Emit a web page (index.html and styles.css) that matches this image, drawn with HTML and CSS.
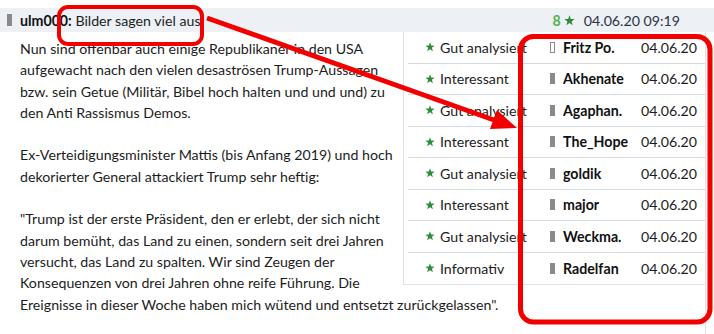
FILE: index.html
```html
<!DOCTYPE html>
<html lang="de">
<head>
    <meta charset="UTF-8">
    <title>Bilder sagen viel aus</title>
    <link rel="stylesheet" href="styles.css">
</head>
<body>
    <!-- Post header -->
    <div class="post-head">
        <div class="post-title">
            <span class="marker"></span>
            <b>ulm000:</b>&nbsp;Bilder sagen viel aus
        </div>
        <div class="post-meta">
            <span class="votes">8</span>
            <svg class="star" width="11" height="11" viewBox="0 0 10 10"><polygon points="5,0.3 6.2,3.6 9.7,3.7 6.9,5.8 7.9,9.3 5,7.2 2.1,9.3 3.1,5.8 0.3,3.7 3.8,3.6" fill="#2e8d3a"/></svg>
            <span class="stamp">04.06.20 09:19</span>
        </div>
    </div>

    <!-- Post body -->
    <div class="post-body">
        <div class="ratings">
            <div class="rating"><svg class="star" width="10" height="10" viewBox="0 0 10 10"><polygon points="5,0.3 6.2,3.6 9.7,3.7 6.9,5.8 7.9,9.3 5,7.2 2.1,9.3 3.1,5.8 0.3,3.7 3.8,3.6" fill="#2e8d3a"/></svg><span class="label">Gut analysiert</span><span class="bar hollow"></span><span class="user">Fritz Po.</span><span class="date">04.06.20</span></div>
            <div class="rating"><svg class="star" width="10" height="10" viewBox="0 0 10 10"><polygon points="5,0.3 6.2,3.6 9.7,3.7 6.9,5.8 7.9,9.3 5,7.2 2.1,9.3 3.1,5.8 0.3,3.7 3.8,3.6" fill="#2e8d3a"/></svg><span class="label">Interessant</span><span class="bar"></span><span class="user">Akhenate</span><span class="date">04.06.20</span></div>
            <div class="rating"><svg class="star" width="10" height="10" viewBox="0 0 10 10"><polygon points="5,0.3 6.2,3.6 9.7,3.7 6.9,5.8 7.9,9.3 5,7.2 2.1,9.3 3.1,5.8 0.3,3.7 3.8,3.6" fill="#2e8d3a"/></svg><span class="label">Gut analysiert</span><span class="bar"></span><span class="user">Agaphan.</span><span class="date">04.06.20</span></div>
            <div class="rating"><svg class="star" width="10" height="10" viewBox="0 0 10 10"><polygon points="5,0.3 6.2,3.6 9.7,3.7 6.9,5.8 7.9,9.3 5,7.2 2.1,9.3 3.1,5.8 0.3,3.7 3.8,3.6" fill="#2e8d3a"/></svg><span class="label">Interessant</span><span class="bar"></span><span class="user">The_Hope</span><span class="date">04.06.20</span></div>
            <div class="rating"><svg class="star" width="10" height="10" viewBox="0 0 10 10"><polygon points="5,0.3 6.2,3.6 9.7,3.7 6.9,5.8 7.9,9.3 5,7.2 2.1,9.3 3.1,5.8 0.3,3.7 3.8,3.6" fill="#2e8d3a"/></svg><span class="label">Gut analysiert</span><span class="bar"></span><span class="user">goldik</span><span class="date">04.06.20</span></div>
            <div class="rating"><svg class="star" width="10" height="10" viewBox="0 0 10 10"><polygon points="5,0.3 6.2,3.6 9.7,3.7 6.9,5.8 7.9,9.3 5,7.2 2.1,9.3 3.1,5.8 0.3,3.7 3.8,3.6" fill="#2e8d3a"/></svg><span class="label">Interessant</span><span class="bar"></span><span class="user">major</span><span class="date">04.06.20</span></div>
            <div class="rating"><svg class="star" width="10" height="10" viewBox="0 0 10 10"><polygon points="5,0.3 6.2,3.6 9.7,3.7 6.9,5.8 7.9,9.3 5,7.2 2.1,9.3 3.1,5.8 0.3,3.7 3.8,3.6" fill="#2e8d3a"/></svg><span class="label">Gut analysiert</span><span class="bar"></span><span class="user">Weckma.</span><span class="date">04.06.20</span></div>
            <div class="rating"><svg class="star" width="10" height="10" viewBox="0 0 10 10"><polygon points="5,0.3 6.2,3.6 9.7,3.7 6.9,5.8 7.9,9.3 5,7.2 2.1,9.3 3.1,5.8 0.3,3.7 3.8,3.6" fill="#2e8d3a"/></svg><span class="label">Informativ</span><span class="bar"></span><span class="user">Radelfan</span><span class="date">04.06.20</span></div>
        </div>
        <div class="post-text">
            Nun sind offenbar auch einige Republikaner in den USA aufgewacht nach den vielen desaströsen Trump-Aussagen bzw. sein Getue (Militär, Bibel hoch halten und und und) zu den Anti Rassismus Demos.<br><br>
            Ex-Verteidigungsminister Mattis (bis Anfang 2019) und hoch dekorierter General attackiert Trump sehr heftig:<br><br>
            "Trump ist der erste Präsident, den er erlebt, der sich nicht darum bemüht, das Land zu einen, sondern seit drei Jahren versucht, das Land zu spalten. Wir sind Zeugen der Konsequenzen von drei Jahren ohne reife Führung. Die Ereignisse in dieser Woche haben mich wütend und entsetzt zurückgelassen".
        </div>
    </div>

    <!-- Red annotation marks drawn over the screenshot -->
    <svg class="annotations" width="714" height="334" viewBox="0 0 714 334">
        <rect x="59" y="7" width="143" height="37" rx="9" fill="none" stroke="#f20000" stroke-width="4"/>
        <line x1="207" y1="18" x2="494" y2="120" stroke="#f20000" stroke-width="5"/>
        <polygon points="517,128 497,110 490,129" fill="#f20000"/>
        <rect x="520.5" y="36.5" width="189.5" height="285.5" rx="13" fill="none" stroke="#f20000" stroke-width="5"/>
    </svg>
</body>
</html>
```

FILE: styles.css
```css
/* Page basics */
body {
    margin: 0;
    padding-top: 8px;
    font-family: Lato, "Noto Sans", sans-serif;
    font-size: 14.2px;
    color: #1c1c1c;
    background-color: white;
    position: relative;
}

/* Header bar of the post */
.post-head {
    height: 24px;
    background-color: #edf0f4;
    display: flex;
    align-items: center;
    justify-content: space-between;
    padding: 0 34px 0 7px;
}

.post-title {
    display: flex;
    align-items: center;
}

.post-title b {
    color: #111;
}

.marker {
    width: 5px;
    height: 12px;
    background-color: #8a8a8a;
    margin-right: 8px;
}

.post-meta {
    display: flex;
    align-items: center;
}

.votes {
    color: #55b04f;
    font-weight: bold;
    margin-right: 3px;
}

.post-meta .star {
    margin-right: 9px;
}

.stamp {
    color: #2b3447;
}

/* Body of the post, ratings float on the right */
.post-body {
    margin-right: 8px;
    padding-left: 20px;
    border-right: 1px solid #dfe3e8;
    min-height: 302px;
}

.post-text {
    padding-top: 6px;
    line-height: 21.3px;
}

.ratings {
    float: right;
    width: 301px;
    margin-left: 8px;
    border-left: 1px solid #dfe3e8;
    border-bottom: 1px solid #dfe3e8;
}

.rating {
    margin-left: 4px;
    height: 31.5px;
    box-sizing: border-box;
    border-bottom: 1px solid #d5dbe2;
    display: flex;
    align-items: center;
    padding-left: 17px;
    white-space: nowrap;
}

.rating:last-child {
    border-bottom: none;
}

.rating .star {
    margin-right: 5px;
}

.label {
    width: 110px;
}

.bar {
    width: 5px;
    height: 11px;
    background-color: #8a8a8a;
    margin-right: 8px;
    box-sizing: border-box;
}

.bar.hollow {
    background-color: transparent;
    border: 1px solid #8a8a8a;
}

.user {
    width: 67px;
    margin-right: 11px;
    overflow: hidden;
    font-weight: bold;
    color: #111;
}

.date {
    color: #1c1c1c;
}

/* Annotation overlay */
.annotations {
    position: absolute;
    top: 0;
    left: 0;
    pointer-events: none;
}
```
